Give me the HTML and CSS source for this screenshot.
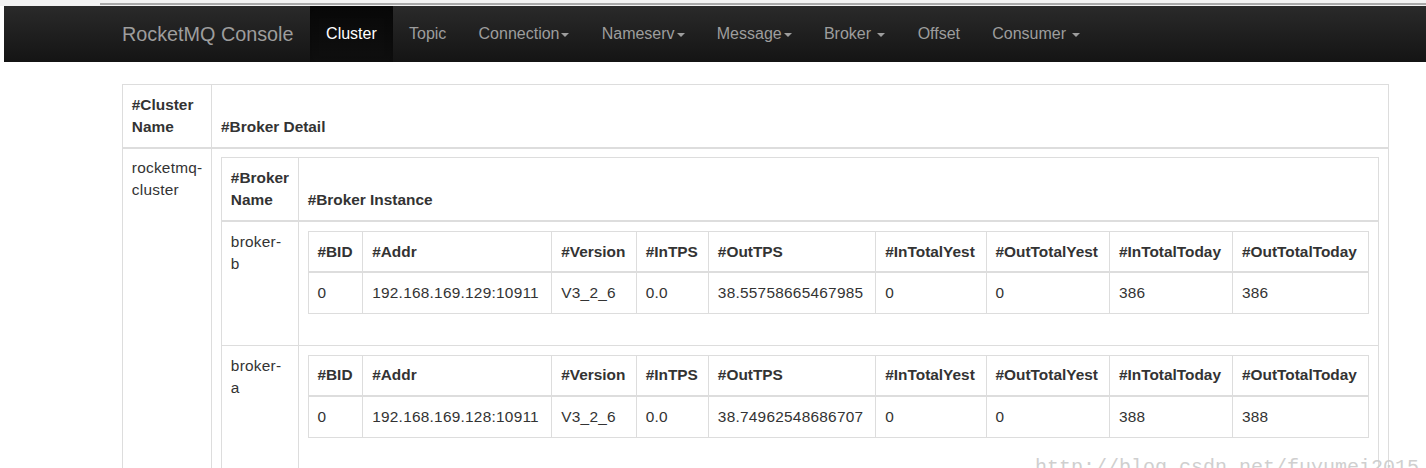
FILE: index.html
```html
<!DOCTYPE html>
<html>
<head>
<meta charset="utf-8">
<title>RocketMQ Console</title>
<link rel="stylesheet" href="styles.css">
</head>
<body>
<div class="topstrip"><div class="topline"></div></div>
<nav class="navbar">
  <div class="nav-container">
    <span class="brand">RocketMQ Console</span>
    <ul class="nav">
      <li class="active"><a>Cluster</a></li>
      <li><a>Topic</a></li>
      <li><a>Connection<span class="caret"></span></a></li>
      <li><a>Nameserv<span class="caret"></span></a></li>
      <li><a>Message<span class="caret"></span></a></li>
      <li><a>Broker <span class="caret"></span></a></li>
      <li><a>Offset</a></li>
      <li><a>Consumer <span class="caret"></span></a></li>
    </ul>
  </div>
</nav>
<main class="page">
  <table class="tbl">
    <thead>
      <tr><th class="c-name">#Cluster Name</th><th>#Broker Detail</th></tr>
    </thead>
    <tbody>
      <tr>
        <td class="c-name">rocketmq-cluster</td>
        <td>
          <table class="tbl">
            <thead>
              <tr><th class="c-name">#Broker Name</th><th>#Broker Instance</th></tr>
            </thead>
            <tbody>
              <tr>
                <td class="c-name">broker-b</td>
                <td>
                  <table class="tbl">
                    <thead>
                      <tr><th>#BID</th><th>#Addr</th><th>#Version</th><th>#InTPS</th><th>#OutTPS</th><th>#InTotalYest</th><th>#OutTotalYest</th><th>#InTotalToday</th><th>#OutTotalToday</th></tr>
                    </thead>
                    <tbody>
                      <tr><td>0</td><td>192.168.169.129:10911</td><td>V3_2_6</td><td>0.0</td><td>38.55758665467985</td><td>0</td><td>0</td><td>386</td><td>386</td></tr>
                    </tbody>
                  </table>
                </td>
              </tr>
              <tr>
                <td class="c-name">broker-a</td>
                <td>
                  <table class="tbl">
                    <thead>
                      <tr><th>#BID</th><th>#Addr</th><th>#Version</th><th>#InTPS</th><th>#OutTPS</th><th>#InTotalYest</th><th>#OutTotalYest</th><th>#InTotalToday</th><th>#OutTotalToday</th></tr>
                    </thead>
                    <tbody>
                      <tr><td>0</td><td>192.168.169.128:10911</td><td>V3_2_6</td><td>0.0</td><td>38.74962548686707</td><td>0</td><td>0</td><td>388</td><td>388</td></tr>
                    </tbody>
                  </table>
                </td>
              </tr>
            </tbody>
          </table>
        </td>
      </tr>
    </tbody>
  </table>
</main>
<div class="watermark">http://blog.csdn.net/fuyumei2015</div>
</body>
</html>
```
FILE: styles.css
```css
html, body {
  margin: 0;
  padding: 0;
  background: #fff;
  overflow: hidden;
}
body {
  font-family: "Liberation Sans", Arial, sans-serif;
  font-size: 15.4px;
  line-height: 22px;
  color: #333;
  position: relative;
  height: 468px;
}
.topstrip {
  height: 6px;
  background: #f2f2f2;
  padding-left: 100px;
  box-sizing: border-box;
  padding-top: 3px;
}
.topline {
  height: 2px;
  background: #a8a8a8;
}
.navbar {
  margin-left: 4px;
  height: 56px;
  background: linear-gradient(to bottom, #2a2a2a 0, #141414 100%);
  margin-bottom: 22px;
}
.nav-container {
  display: flex;
  align-items: stretch;
  height: 56px;
  padding-left: 101.5px;
}
.brand {
  padding: 0 16.5px;
  font-size: 19.8px;
  line-height: 56px;
  color: #9d9d9d;
}
.nav {
  display: flex;
  list-style: none;
  margin: 0;
  padding: 0;
}
.nav li a {
  display: block;
  padding: 0 16.1px;
  line-height: 56px;
  color: #9d9d9d;
  font-size: 16px;
}
.nav li.active a {
  color: #fff;
  background: linear-gradient(to bottom, #080808 0, #0f0f0f 100%);
  box-shadow: inset 0 3px 9px rgba(0, 0, 0, 0.25);
}
.caret {
  display: inline-block;
  width: 0;
  height: 0;
  margin-left: 2px;
  vertical-align: middle;
  border-top: 4.4px solid #9d9d9d;
  border-left: 4.4px solid transparent;
  border-right: 4.4px solid transparent;
}
.page {
  padding-left: 122px;
  width: 1267px;
}
.tbl {
  width: 100%;
  border-collapse: collapse;
  border-spacing: 0;
  margin-bottom: 22px;
  border: 1px solid #ddd;
}
.tbl th, .tbl td {
  padding: 8.8px;
  line-height: 22px;
  border: 1px solid #ddd;
  text-align: left;
  vertical-align: top;
}
.tbl td {
  letter-spacing: 0.25px;
}
.tbl td .tbl {
  letter-spacing: normal;
}
.tbl th {
  font-weight: bold;
}
.tbl thead th {
  vertical-align: bottom;
  border-bottom-width: 2px;
}
.tbl .c-name {
  width: 1%;
}
.watermark {
  position: absolute;
  left: 1035px;
  top: 457px;
  font-family: "Liberation Mono", monospace;
  font-size: 20px;
  color: #cfcfcf;
  white-space: nowrap;
}
```
